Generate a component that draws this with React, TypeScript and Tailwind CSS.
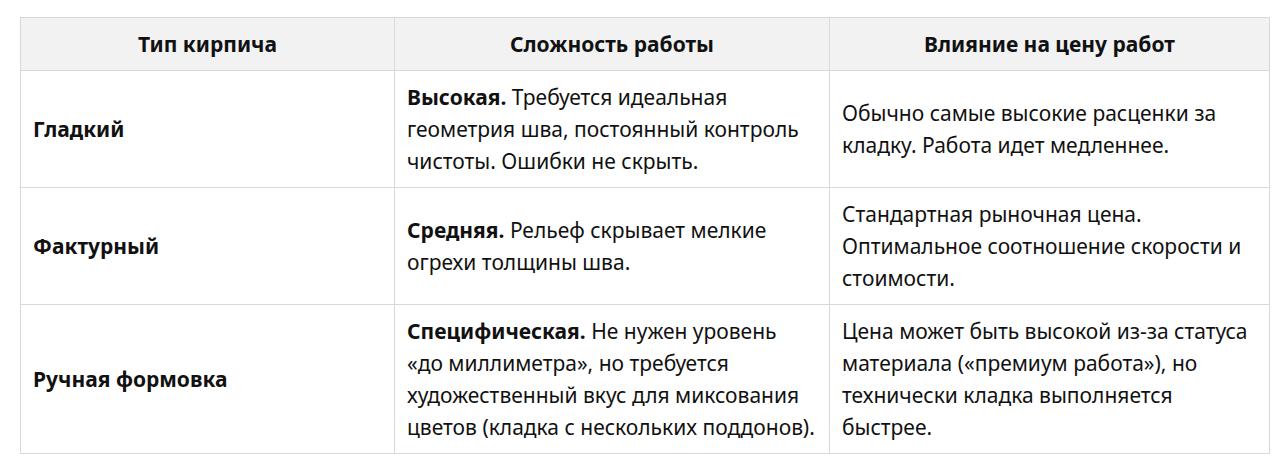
const rows = [
  {
    type: "Гладкий",
    level: "Высокая.",
    difficulty: ["Требуется идеальная", "геометрия шва, постоянный контроль", "чистоты. Ошибки не скрыть."],
    price: ["Обычно самые высокие расценки за", "кладку. Работа идет медленнее."],
  },
  {
    type: "Фактурный",
    level: "Средняя.",
    difficulty: ["Рельеф скрывает мелкие", "огрехи толщины шва."],
    price: ["Стандартная рыночная цена.", "Оптимальное соотношение скорости и", "стоимости."],
  },
  {
    type: "Ручная формовка",
    level: "Специфическая.",
    difficulty: [
      "Не нужен уровень",
      "«до миллиметра», но требуется",
      "художественный вкус для миксования",
      "цветов (кладка с нескольких поддонов).",
    ],
    price: [
      "Цена может быть высокой из-за статуса",
      "материала («премиум работа»), но",
      "технически кладка выполняется",
      "быстрее.",
    ],
  },
];

function Lines({ lines }: { lines: string[] }) {
  return (
    <>
      {lines.map((line, i) => (
        <span key={i}>
          {i > 0 && <br />}
          {line}
        </span>
      ))}
    </>
  );
}

export default function App() {
  return (
    <div className="min-h-[471px] bg-white px-5 pt-[17px] font-['Noto_Sans',sans-serif] text-[#111]">
      <table className="w-[1249px] table-fixed border-collapse text-[21px] leading-8">
        <colgroup>
          <col className="w-[374px]" />
          <col className="w-[435px]" />
          <col className="w-[440px]" />
        </colgroup>
        <thead>
          <tr className="bg-[#f2f2f2]">
            <th className="border border-[#d9d9d9] px-3 py-2.5 text-center text-[21px] font-bold">Тип кирпича</th>
            <th className="border border-[#d9d9d9] px-3 py-2.5 text-center text-[21px] font-bold">Сложность работы</th>
            <th className="border border-[#d9d9d9] px-3 py-2.5 text-center text-[21px] font-bold">Влияние на цену работ</th>
          </tr>
        </thead>
        <tbody>
          {rows.map((row) => (
            <tr key={row.type}>
              <td className="border border-[#d9d9d9] px-3 py-2.5 align-middle font-bold">{row.type}</td>
              <td className="whitespace-nowrap border border-[#d9d9d9] px-3 py-2.5 align-middle">
                <strong className="font-bold">{row.level}</strong> <Lines lines={row.difficulty} />
              </td>
              <td className="whitespace-nowrap border border-[#d9d9d9] px-3 py-2.5 align-middle">
                <Lines lines={row.price} />
              </td>
            </tr>
          ))}
        </tbody>
      </table>
    </div>
  );
}
